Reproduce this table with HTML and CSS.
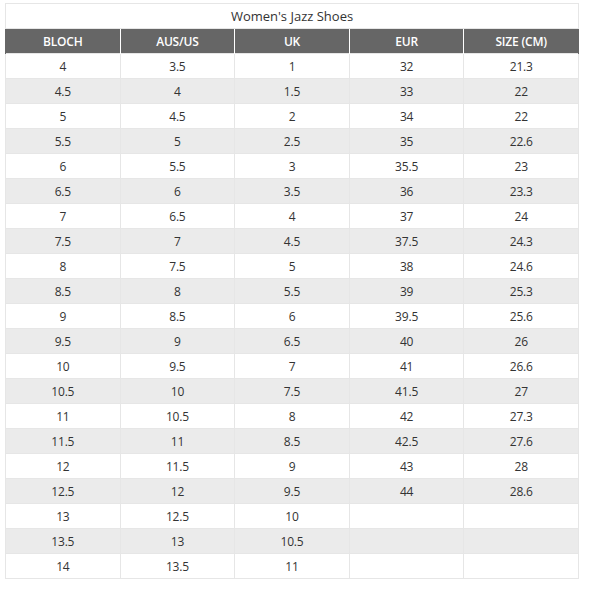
FILE: index.html
```html
<!DOCTYPE html>
<html>
<head>
<meta charset="utf-8">
<link rel="stylesheet" href="styles.css">
</head>
<body>
<table class="size-table">
  <thead>
    <tr class="title-row"><th colspan="5">Women's Jazz Shoes</th></tr>
    <tr class="head-row"><th>BLOCH</th><th>AUS/US</th><th>UK</th><th>EUR</th><th>SIZE (CM)</th></tr>
  </thead>
  <tbody>
    <tr><td>4</td><td>3.5</td><td>1</td><td>32</td><td>21.3</td></tr>
    <tr><td>4.5</td><td>4</td><td>1.5</td><td>33</td><td>22</td></tr>
    <tr><td>5</td><td>4.5</td><td>2</td><td>34</td><td>22</td></tr>
    <tr><td>5.5</td><td>5</td><td>2.5</td><td>35</td><td>22.6</td></tr>
    <tr><td>6</td><td>5.5</td><td>3</td><td>35.5</td><td>23</td></tr>
    <tr><td>6.5</td><td>6</td><td>3.5</td><td>36</td><td>23.3</td></tr>
    <tr><td>7</td><td>6.5</td><td>4</td><td>37</td><td>24</td></tr>
    <tr><td>7.5</td><td>7</td><td>4.5</td><td>37.5</td><td>24.3</td></tr>
    <tr><td>8</td><td>7.5</td><td>5</td><td>38</td><td>24.6</td></tr>
    <tr><td>8.5</td><td>8</td><td>5.5</td><td>39</td><td>25.3</td></tr>
    <tr><td>9</td><td>8.5</td><td>6</td><td>39.5</td><td>25.6</td></tr>
    <tr><td>9.5</td><td>9</td><td>6.5</td><td>40</td><td>26</td></tr>
    <tr><td>10</td><td>9.5</td><td>7</td><td>41</td><td>26.6</td></tr>
    <tr><td>10.5</td><td>10</td><td>7.5</td><td>41.5</td><td>27</td></tr>
    <tr><td>11</td><td>10.5</td><td>8</td><td>42</td><td>27.3</td></tr>
    <tr><td>11.5</td><td>11</td><td>8.5</td><td>42.5</td><td>27.6</td></tr>
    <tr><td>12</td><td>11.5</td><td>9</td><td>43</td><td>28</td></tr>
    <tr><td>12.5</td><td>12</td><td>9.5</td><td>44</td><td>28.6</td></tr>
    <tr><td>13</td><td>12.5</td><td>10</td><td></td><td></td></tr>
    <tr><td>13.5</td><td>13</td><td>10.5</td><td></td><td></td></tr>
    <tr><td>14</td><td>13.5</td><td>11</td><td></td><td></td></tr>
  </tbody>
</table>
</body>
</html>
```
FILE: styles.css
```css
html, body {
  margin: 0;
  padding: 0;
  background: #fff;
}
body {
  padding: 3px 0 0 5px;
  font-family: "Open Sans", "Liberation Sans", sans-serif;
  color: #333;
}
.size-table {
  width: 574px;
  border-collapse: collapse;
  table-layout: fixed;
  font-size: 12px;
}
.size-table th,
.size-table td {
  height: 24px;
  padding: 0;
  text-align: center;
  vertical-align: middle;
  border: 1px solid #e6e6e6;
  letter-spacing: -0.2px;
}
.title-row th {
  font-weight: normal;
  font-size: 13px;
  letter-spacing: 0;
  color: #333;
  background: #fff;
}
.head-row th {
  background: #666;
  color: #fff;
  font-weight: 600;
  border: 1px solid #fff;
  border-top: none;
  border-bottom: none;
}
.head-row th:first-child { border-left-color: #666; }
.head-row th:last-child { border-right-color: #666; }
.size-table tbody tr:nth-child(even) td {
  background: #ebebeb;
}
.size-table tbody tr:nth-child(odd) td {
  background: #fff;
}
```
